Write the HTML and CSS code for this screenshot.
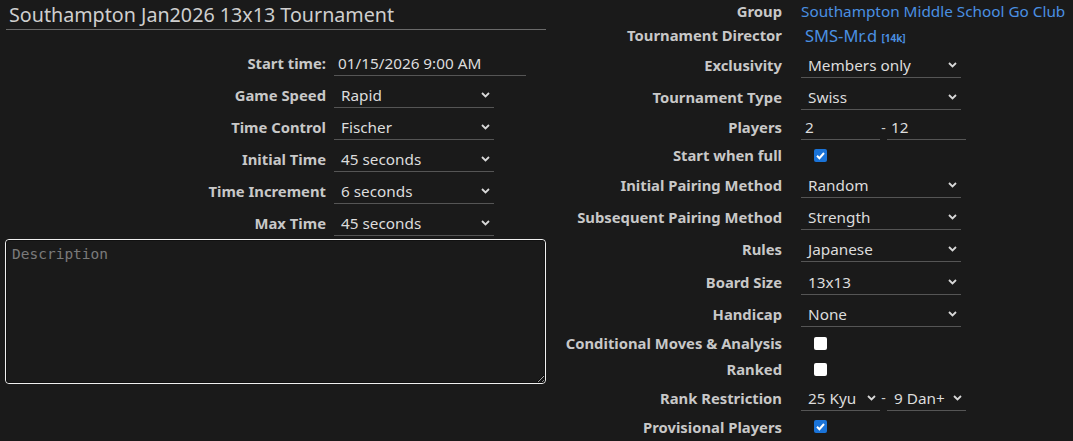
FILE: index.html
```html
<!DOCTYPE html>
<html>
<head>
<meta charset="utf-8">
<link rel="stylesheet" href="styles.css">
</head>
<body>
<div class="page">
  <div class="left">
    <h1 class="title">Southampton Jan2026 13x13 Tournament</h1>
    <div class="lform">
      <label class="lbl">Start time:</label>
      <div class="ctl"><div class="textinput wide">01/15/2026 9:00 AM</div></div>

      <label class="lbl">Game Speed</label>
      <div class="ctl"><div class="select"><span>Rapid</span><svg class="chev" viewBox="0 0 9 6"><path d="M1 1l3.5 3.5L8 1"/></svg></div></div>

      <label class="lbl">Time Control</label>
      <div class="ctl"><div class="select"><span>Fischer</span><svg class="chev" viewBox="0 0 9 6"><path d="M1 1l3.5 3.5L8 1"/></svg></div></div>

      <label class="lbl">Initial Time</label>
      <div class="ctl"><div class="select"><span>45 seconds</span><svg class="chev" viewBox="0 0 9 6"><path d="M1 1l3.5 3.5L8 1"/></svg></div></div>

      <label class="lbl">Time Increment</label>
      <div class="ctl"><div class="select"><span>6 seconds</span><svg class="chev" viewBox="0 0 9 6"><path d="M1 1l3.5 3.5L8 1"/></svg></div></div>

      <label class="lbl">Max Time</label>
      <div class="ctl"><div class="select"><span>45 seconds</span><svg class="chev" viewBox="0 0 9 6"><path d="M1 1l3.5 3.5L8 1"/></svg></div></div>
    </div>
    <textarea class="desc" placeholder="Description"></textarea>
  </div>

  <div class="right">
    <div class="row r21"><label class="lbl">Group</label><div class="ctl"><a class="link">Southampton Middle School Go Club</a></div></div>
    <div class="row r28"><label class="lbl">Tournament Director</label><div class="ctl"><a class="link player">SMS-Mr.d <span class="rank">[14k]</span></a></div></div>
    <div class="row r32"><label class="lbl">Exclusivity</label><div class="ctl"><div class="select"><span>Members only</span><svg class="chev" viewBox="0 0 9 6"><path d="M1 1l3.5 3.5L8 1"/></svg></div></div></div>
    <div class="row r32"><label class="lbl">Tournament Type</label><div class="ctl"><div class="select"><span>Swiss</span><svg class="chev" viewBox="0 0 9 6"><path d="M1 1l3.5 3.5L8 1"/></svg></div></div></div>
    <div class="row r28"><label class="lbl">Players</label><div class="ctl"><div class="textinput half">2</div><span class="dash">-</span><div class="textinput half">12</div></div></div>
    <div class="row r28"><label class="lbl">Start when full</label><div class="ctl"><span class="cb on"><svg viewBox="0 0 13 13"><path d="M3 6.8l2.4 2.4L10 4"/></svg></span></div></div>
    <div class="row r32"><label class="lbl">Initial Pairing Method</label><div class="ctl"><div class="select"><span>Random</span><svg class="chev" viewBox="0 0 9 6"><path d="M1 1l3.5 3.5L8 1"/></svg></div></div></div>
    <div class="row r32"><label class="lbl">Subsequent Pairing Method</label><div class="ctl"><div class="select"><span>Strength</span><svg class="chev" viewBox="0 0 9 6"><path d="M1 1l3.5 3.5L8 1"/></svg></div></div></div>
    <div class="row r32"><label class="lbl">Rules</label><div class="ctl"><div class="select"><span>Japanese</span><svg class="chev" viewBox="0 0 9 6"><path d="M1 1l3.5 3.5L8 1"/></svg></div></div></div>
    <div class="row r33"><label class="lbl">Board Size</label><div class="ctl"><div class="select"><span>13x13</span><svg class="chev" viewBox="0 0 9 6"><path d="M1 1l3.5 3.5L8 1"/></svg></div></div></div>
    <div class="row r32"><label class="lbl">Handicap</label><div class="ctl"><div class="select"><span>None</span><svg class="chev" viewBox="0 0 9 6"><path d="M1 1l3.5 3.5L8 1"/></svg></div></div></div>
    <div class="row r26"><label class="lbl">Conditional Moves &amp; Analysis</label><div class="ctl"><span class="cb"></span></div></div>
    <div class="row r26"><label class="lbl">Ranked</label><div class="ctl"><span class="cb"></span></div></div>
    <div class="row r31"><label class="lbl">Rank Restriction</label><div class="ctl"><div class="select half"><span>25 Kyu</span><svg class="chev" viewBox="0 0 9 6"><path d="M1 1l3.5 3.5L8 1"/></svg></div><span class="dash">-</span><div class="select half"><span>9 Dan+</span><svg class="chev" viewBox="0 0 9 6"><path d="M1 1l3.5 3.5L8 1"/></svg></div></div></div>
    <div class="row r27"><label class="lbl">Provisional Players</label><div class="ctl"><span class="cb on"><svg viewBox="0 0 13 13"><path d="M3 6.8l2.4 2.4L10 4"/></svg></span></div></div>
  </div>
</div>
</body>
</html>
```

FILE: styles.css
```css
html, body {
  margin: 0;
  padding: 0;
  background: #1a1a1a;
  height: 100%;
  overflow: hidden;
}
body {
  font-family: "Noto Sans", "Open Sans", sans-serif;
  color: #cccccc;
}
.page {
  display: flex;
  align-items: flex-start;
}
.left {
  width: 541px;
  margin-left: 5px;
  display: flex;
  flex-direction: column;
}
.title {
  margin: 0 0 0 1px;
  padding: 2px 0 0 3px;
  height: 27px;
  font-size: 19.7px;
  font-weight: 400;
  line-height: 26px;
  color: #cfcfcf;
  border-bottom: 1px solid #6a6a6a;
}
.lform {
  margin-top: 17px;
  display: grid;
  grid-template-columns: 321px 192px;
  grid-auto-rows: 32px;
  column-gap: 8px;
  align-items: center;
}
.lbl {
  text-align: right;
  font-weight: 700;
  font-size: 14.8px;
  color: #c8c8c8;
  white-space: nowrap;
}
.ctl {
  display: flex;
  align-items: center;
}
.textinput {
  box-sizing: border-box;
  height: 26px;
  padding: 1px 0 0 4px;
  line-height: 24px;
  font-size: 15.3px;
  color: #dddddd;
  border-bottom: 1px solid #555;
}
.textinput.wide { width: 192px; }
.textinput.half { width: 79px; }
.select {
  box-sizing: border-box;
  width: 160px;
  height: 26px;
  display: flex;
  align-items: center;
  justify-content: space-between;
  padding: 1px 4px 0 7px;
  font-size: 15.3px;
  color: #dddddd;
  border-bottom: 1px solid #555;
}
.select.half { width: 79px; }
.chev {
  width: 9px;
  height: 6px;
  fill: none;
  stroke: #d8d8d8;
  stroke-width: 1.8;
}
.desc {
  box-sizing: border-box;
  margin: 0;
  width: 541px;
  height: 145px;
  background: #1a1a1a;
  border: 1px solid #f0f0f0;
  border-radius: 4px;
  outline: 1px solid #111;
  outline-offset: -2px;
  padding: 6px 6px;
  font-family: "DejaVu Sans Mono", monospace;
  font-size: 14.5px;
  color: #ddd;
  resize: both;
}
.desc::placeholder {
  color: #7a7a7a;
}
.right {
  margin-left: 4px;
  width: 523px;
  display: flex;
  flex-direction: column;
}
.row {
  display: grid;
  grid-template-columns: 232px auto;
  column-gap: 19px;
  align-items: center;
}
.r21 { height: 21px; }
.r26 { height: 26px; }
.r27 { height: 27px; }
.r28 { height: 28px; }
.r31 { height: 31px; }
.r32 { height: 32px; }
.r33 { height: 33px; }
.link {
  color: #4a90e2;
  font-size: 15.3px;
  text-decoration: none;
}
.player {
  padding-left: 4px;
  font-size: 16.5px;
}
.rank {
  font-size: 10px;
  font-weight: 700;
}
.dash {
  width: 7px;
  text-align: center;
  font-size: 14px;
  color: #ccc;
}
.cb {
  box-sizing: border-box;
  margin-left: 13px;
  width: 13px;
  height: 13px;
  border-radius: 2px;
  background: #ffffff;
  display: inline-flex;
}
.cb.on {
  background: #1a73d8;
}
.cb svg {
  width: 13px;
  height: 13px;
  fill: none;
  stroke: #fff;
  stroke-width: 2;
}
```
